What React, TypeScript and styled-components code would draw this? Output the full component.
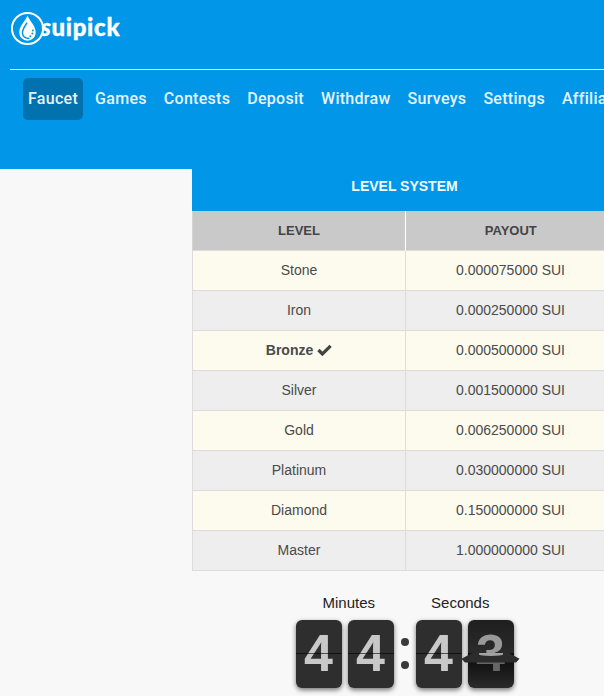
import { createGlobalStyle } from "styled-components";
import styled from "styled-components";

const levels = [
  { name: "Stone", payout: "0.000075000 SUI" },
  { name: "Iron", payout: "0.000250000 SUI" },
  { name: "Bronze", payout: "0.000500000 SUI", current: true },
  { name: "Silver", payout: "0.001500000 SUI" },
  { name: "Gold", payout: "0.006250000 SUI" },
  { name: "Platinum", payout: "0.030000000 SUI" },
  { name: "Diamond", payout: "0.150000000 SUI" },
  { name: "Master", payout: "1.000000000 SUI" },
];

const navItems = ["Faucet", "Games", "Contests", "Deposit", "Withdraw", "Surveys", "Settings", "Affiliate"];

const DropLogo = () => (
  <svg width="35" height="35" viewBox="0 0 36 36" fill="none">
    <circle cx="18" cy="18" r="16" stroke="#fff" strokeWidth="2" />
    <path d="M18 4.5C16 10 9.5 15 9.5 22a8.5 8.5 0 0 0 17 0C26.5 15 20 10 18 4.5Z" fill="#fff" />
    <path d="M17.5 12C15.5 15.5 12.8 18.5 12.8 22.5a5.7 5.7 0 0 0 7.2 5.4" stroke="#0296e8" strokeWidth="1.5" />
    <circle cx="23.5" cy="20" r="1" fill="#0296e8" />
    <circle cx="23" cy="23.2" r="1" fill="#0296e8" />
    <circle cx="21" cy="26" r="1" fill="#0296e8" />
  </svg>
);

const Check = () => (
  <svg width="15" height="12" viewBox="0 0 15 12">
    <path d="M1.4 6 5.4 10 13.6 1.8" fill="none" stroke="#444" strokeWidth="3.2" />
  </svg>
);

const App = () => {
  return (
    <Page>
      <GlobalStyle />
      <Header>
        <LogoRow>
          <DropLogo />
          <LogoText>
            <LogoS>s</LogoS>uipick
          </LogoText>
        </LogoRow>
        <Divider />
        <Nav>
          {navItems.map((item) => (
            <NavItem key={item} $active={item === "Faucet"}>
              {item}
            </NavItem>
          ))}
        </Nav>
      </Header>
      <Body>
        <Sidebar />
        <Content>
          <PanelTitle>LEVEL SYSTEM</PanelTitle>
          <LevelTable>
            <thead>
              <tr>
                <HeadCell>LEVEL</HeadCell>
                <HeadCell>PAYOUT</HeadCell>
              </tr>
            </thead>
            <tbody>
              {levels.map((level) => (
                <Row key={level.name}>
                  <Cell $bold={level.current}>
                    {level.name}
                    {level.current && (
                      <CheckWrap>
                        <Check />
                      </CheckWrap>
                    )}
                  </Cell>
                  <Cell>{level.payout}</Cell>
                </Row>
              ))}
            </tbody>
          </LevelTable>
          <LabelRow>
            <ClockLabel>Minutes</ClockLabel>
            <ClockLabel>Seconds</ClockLabel>
          </LabelRow>
          <Clock>
            <Cards>
              <FlipCard>
                <Digit>4</Digit>
              </FlipCard>
              <FlipCard>
                <Digit>4</Digit>
              </FlipCard>
            </Cards>
            <Colon>
              <Dot />
              <Dot />
            </Colon>
            <Cards>
              <FlipCard>
                <Digit>4</Digit>
              </FlipCard>
              <FlipCard $flipping>
                <TopHalf>
                  <TopDigit>3</TopDigit>
                </TopHalf>
                <BottomHalf>
                  <BottomDigit>4</BottomDigit>
                </BottomHalf>
                <Flap>
                  <FlapShine />
                </Flap>
              </FlipCard>
            </Cards>
          </Clock>
        </Content>
      </Body>
    </Page>
  );
};

export default App;

const GlobalStyle = createGlobalStyle`
  html, body {
    margin: 0;
    padding: 0;
    background: #f8f8f8;
  }
  * {
    box-sizing: border-box;
  }
`;

const Page = styled.div`
  width: 604px;
  height: 696px;
  overflow: hidden;
  font-family: "Liberation Sans", Arial, sans-serif;
  color: #4a4a4a;
`;

// top blue header
const Header = styled.header`
  height: 169px;
  background: #0296e8;
  padding: 11px 0 0 10px;
  overflow: hidden;
`;

const LogoRow = styled.div`
  display: flex;
  align-items: center;
  height: 35px;
  margin-bottom: 23px;
`;

const LogoText = styled.span`
  font-family: Lato, sans-serif;
  font-size: 24px;
  font-weight: 900;
  color: #fff;
  letter-spacing: 0.7px;
  margin-left: -4px;
  margin-top: -3px;
  line-height: 1;
  -webkit-text-stroke: 0.4px #fff;
`;

const LogoS = styled.span`
  font-style: italic;
`;

const Divider = styled.div`
  height: 1px;
  background: #dff1fc;
`;

const Nav = styled.nav`
  display: flex;
  gap: 7px;
  margin-top: 8px;
  padding-left: 13px;
  white-space: nowrap;
`;

const NavItem = styled.a<{ $active?: boolean }>`
  display: block;
  height: 42px;
  padding: 0 5px;
  border-radius: 5px;
  font-family: Roboto, sans-serif;
  font-size: 16px;
  font-weight: 500;
  letter-spacing: 0.29px;
  line-height: 42px;
  color: #e6f4fd;
  background: ${(p) => (p.$active ? "#0272ae" : "transparent")};
`;

// page body
const Body = styled.div`
  display: flex;
`;

const Sidebar = styled.aside`
  width: 192px;
  flex-shrink: 0;
`;

const Content = styled.main`
  width: 425px;
  flex-shrink: 0;
`;

const PanelTitle = styled.div`
  height: 42px;
  background: #0296e8;
  color: #f2f9fe;
  font-size: 14px;
  font-weight: 700;
  line-height: 34px;
  text-align: center;
`;

const LevelTable = styled.table`
  width: 424px;
  table-layout: fixed;
  border-collapse: collapse;
  font-size: 14px;
`;

const HeadCell = styled.th`
  height: 39px;
  padding: 0;
  background: #c9c9c9;
  color: #444;
  font-size: 13px;
  font-weight: 700;
  text-align: center;
  border-left: 1px solid #fff;
  &:first-child {
    width: 213px;
    border-left: 1px solid #d4d4d4;
  }
`;

const Row = styled.tr`
  height: 40px;
  background: #fdfbee;
  &:nth-child(even) {
    background: #eeeeee;
  }
`;

const Cell = styled.td<{ $bold?: boolean }>`
  padding: 0;
  text-align: center;
  font-weight: ${(p) => (p.$bold ? 700 : 400)};
  border: 1px solid #dcdcdc;
`;

const CheckWrap = styled.span`
  margin-left: 4px;
  svg {
    vertical-align: -1px;
  }
`;

// flip clock
const LabelRow = styled.div`
  display: flex;
  justify-content: center;
  gap: 56px;
  padding: 23px 0 0 3px;
`;

const ClockLabel = styled.div`
  font-size: 15px;
  line-height: 17px;
  color: #222;
`;

const Clock = styled.div`
  display: flex;
  justify-content: center;
  margin-top: 9px;
`;

const Cards = styled.div`
  display: flex;
  gap: 6px;
`;

const Colon = styled.div`
  width: 22px;
  padding-top: 18px;
  display: flex;
  flex-direction: column;
  align-items: center;
  gap: 15px;
`;

const Dot = styled.div`
  width: 8px;
  height: 8px;
  border-radius: 50%;
  background: #3a3a3a;
`;

const FlipCard = styled.div<{ $flipping?: boolean }>`
  position: relative;
  width: 46px;
  height: 68px;
  border-radius: 6px;
  background: ${(p) =>
    p.$flipping
      ? "linear-gradient(#1f1f1f 0, #2b2b2b 49%, #0a0a0a 51%, #2a2a2a 100%)"
      : "#2e2e2e"};
  box-shadow: 0 2px 5px rgba(0, 0, 0, 0.55);
  &::after {
    content: "";
    position: absolute;
    left: 0;
    right: 0;
    top: 33px;
    height: 1px;
    background: rgba(0, 0, 0, 0.6);
  }
`;

const Digit = styled.div`
  font-size: 52px;
  font-weight: 700;
  line-height: 66px;
  height: 66px;
  text-align: center;
  color: #c8c8c8;
`;

const TopHalf = styled.div`
  position: absolute;
  inset: 0 0 34px 0;
  overflow: hidden;
`;

const BottomHalf = styled.div`
  position: absolute;
  inset: 34px 0 0 0;
  overflow: hidden;
`;

const TopDigit = styled(Digit)`
  color: #999;
`;

const BottomDigit = styled(Digit)`
  color: #666;
  margin-top: -34px;
`;

const Flap = styled.div`
  position: absolute;
  left: -6px;
  right: -6px;
  top: 33px;
  height: 10px;
  background: #2c2c2c;
  clip-path: polygon(20% 0, 80% 0, 100% 62%, 94% 100%, 6% 100%, 0 62%);
  z-index: 2;
`;

const FlapShine = styled.div`
  width: 24px;
  height: 3px;
  margin: 0 auto;
  background: #a2a2a2;
  border-radius: 0 0 50% 50%;
`;
